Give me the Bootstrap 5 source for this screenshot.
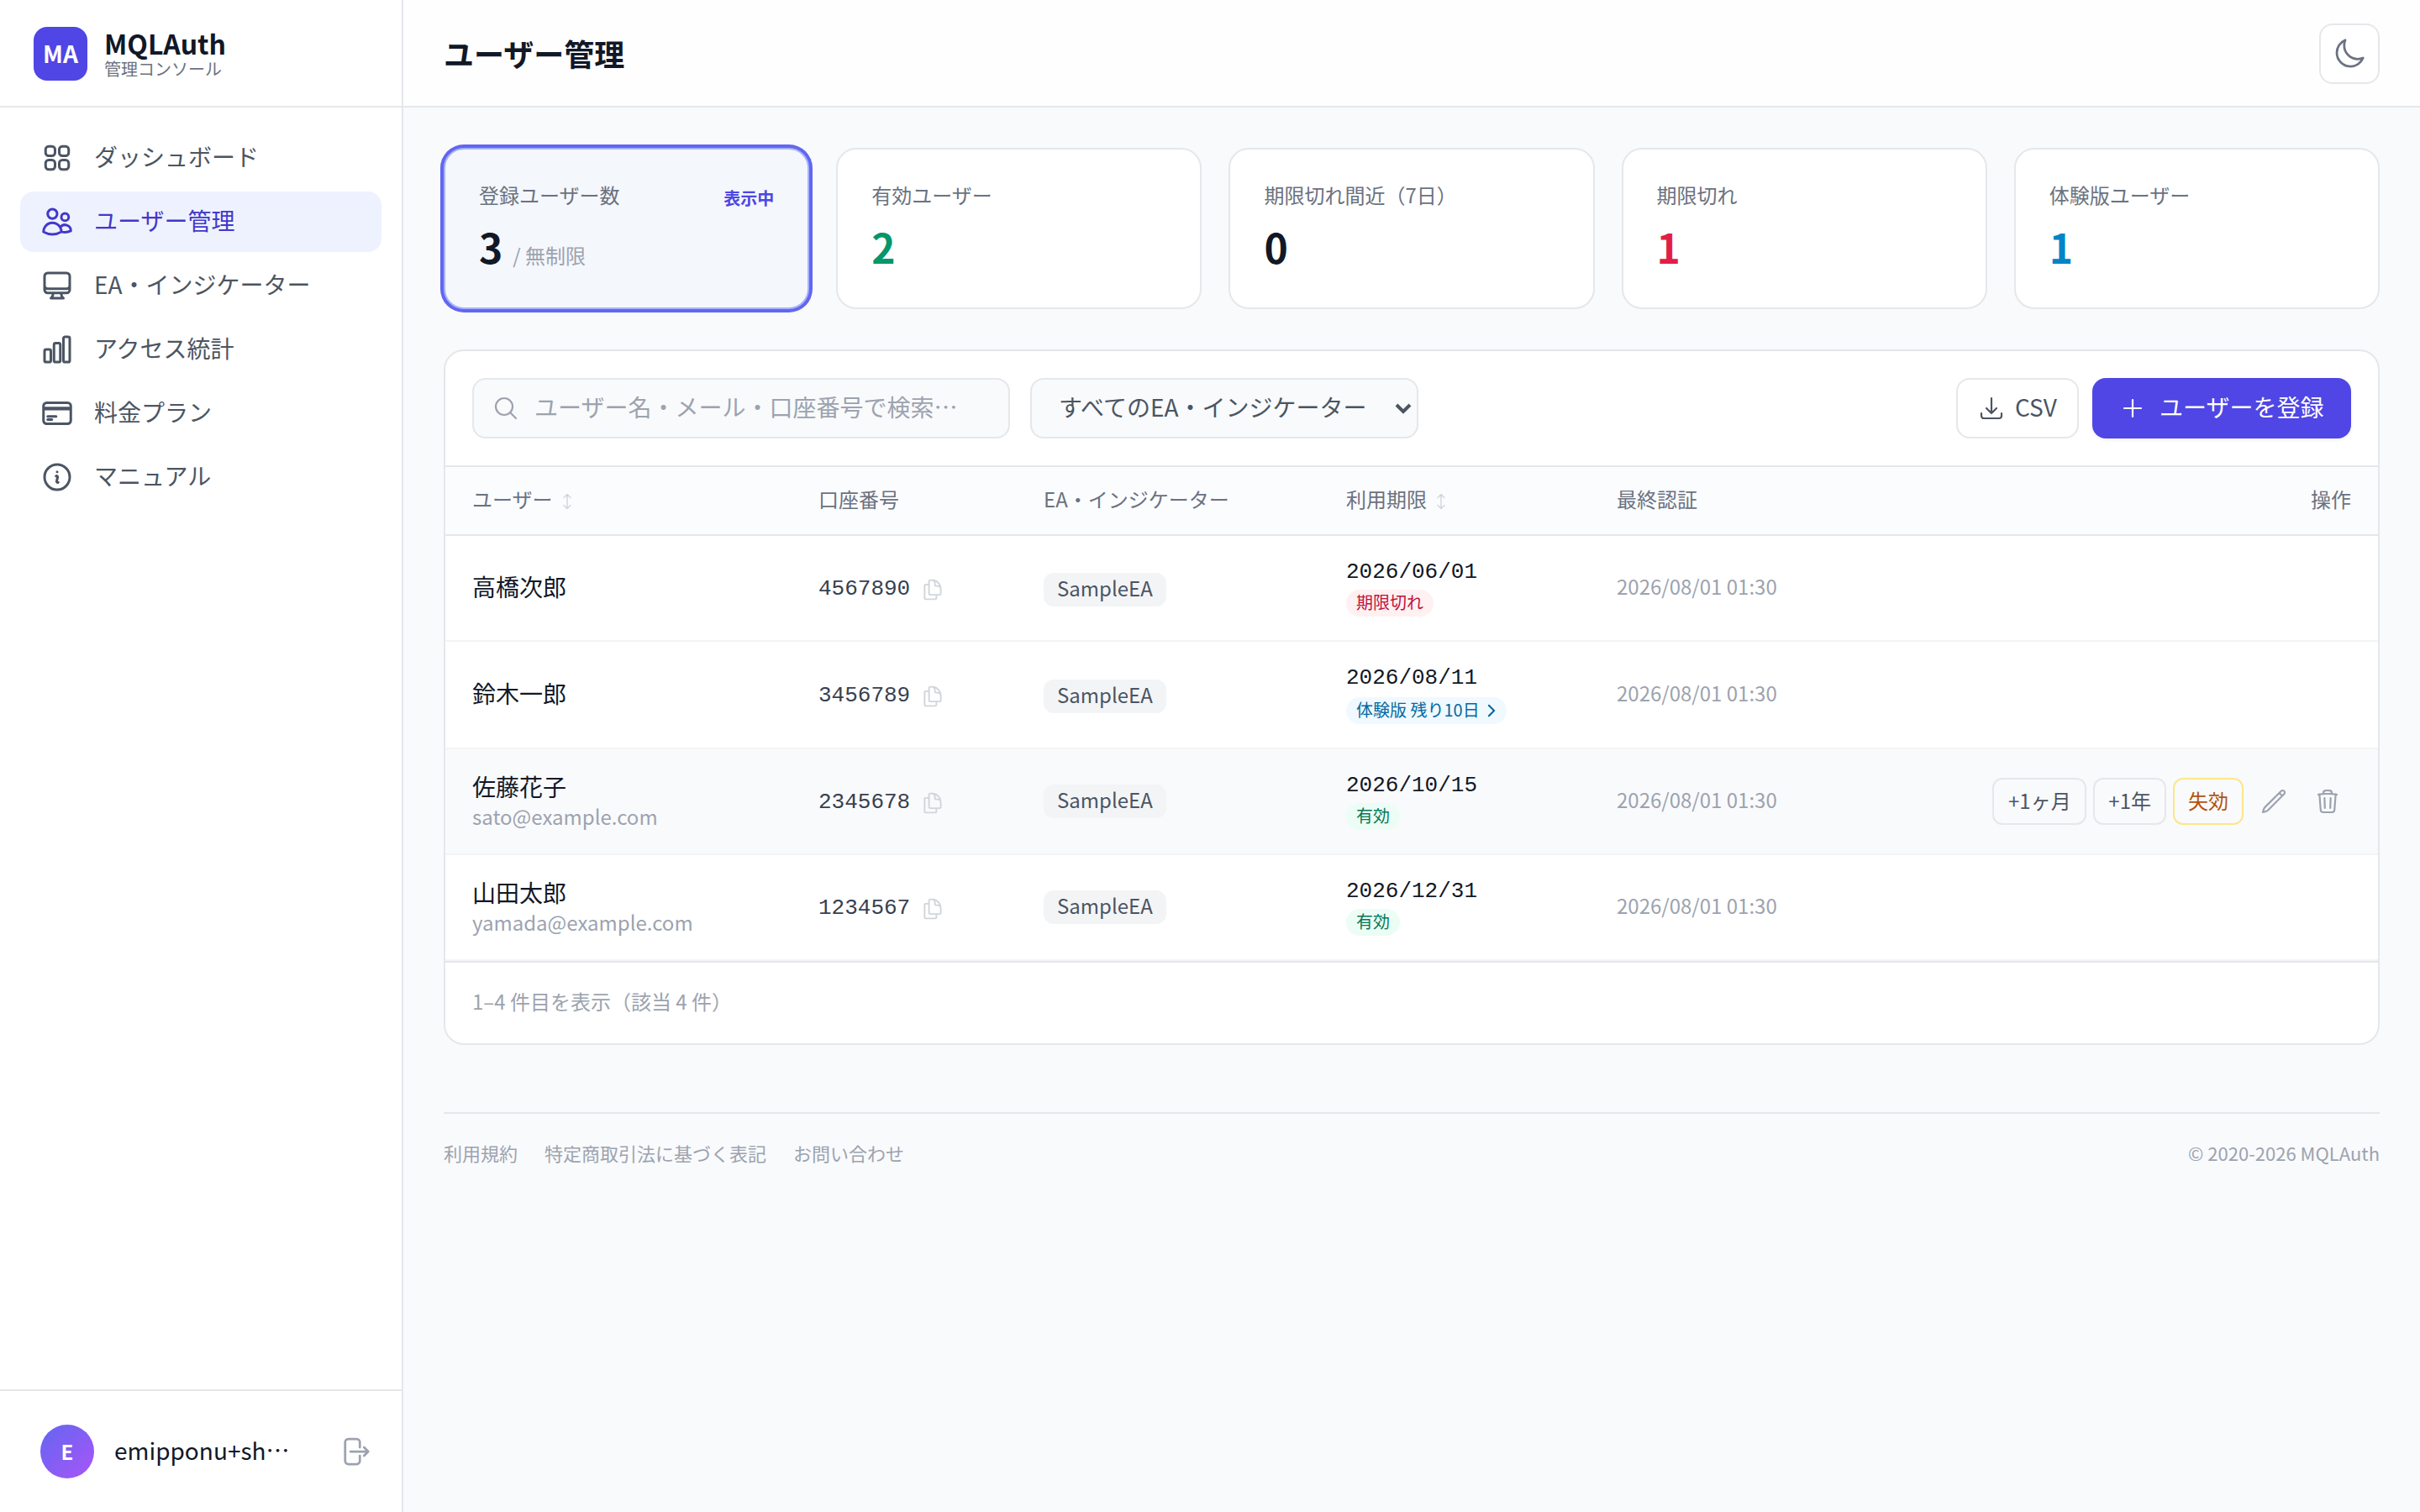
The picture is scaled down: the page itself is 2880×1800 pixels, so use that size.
<!DOCTYPE html>
<html lang="ja">
<head>
<meta charset="utf-8">
<meta name="viewport" content="width=device-width, initial-scale=1">
<title>ユーザー管理 | MQLAuth</title>
<link href="https://cdn.jsdelivr.net/npm/bootstrap@5.3.0/dist/css/bootstrap.min.css" rel="stylesheet">
<style>
  body { font-family: "Noto Sans CJK JP", sans-serif; font-size: 28px; line-height: 40px; color: #111827; background: #f9fafc; }
  a { text-decoration: none; color: inherit; }
  svg { fill: none; stroke: currentColor; stroke-width: 1.65; stroke-linecap: round; stroke-linejoin: round; flex: none; display: block; }
  .ico-lg { width: 40px; height: 40px; }
  .ico-md { width: 32px; height: 32px; }
  .ico-sm { width: 28px; height: 28px; }
  .txt { padding-bottom: 4px; }
  .app { height: 1800px; }

  .side { width: 480px; flex: none; border-right: 2px solid #e5e7eb; }
  .brand { height: 128px; padding: 2px 40px 0; gap: 20px; border-bottom: 2px solid #e5e7eb; }
  .logo { width: 64px; height: 64px; border-radius: 16px; background: #4f46e5; font-size: 28px; padding-bottom: 2px; }
  .brand-name { font-size: 32px; line-height: 36px; }
  .brand-sub { font-size: 20px; line-height: 26px; color: #6b7280; }
  .side .nav { padding: 24px; gap: 4px; }
  .side .nav-link { height: 72px; padding: 0 24px; gap: 24px; border-radius: 16px; color: #4b5563; }
  .side .nav-link.active { background: #eef2ff; color: #4338ca; }
  .side .nav-link svg { stroke-width: 1.8; }
  .account { height: 146px; padding: 0 36px 0 48px; border-top: 2px solid #e5e7eb; }
  .avatar { width: 64px; height: 64px; background: linear-gradient(135deg, #6366f1, #a855f7); font-size: 24px; }

  .topbar { height: 128px; padding: 2px 48px 0; background: #fefefe; border-bottom: 2px solid #e5e7eb; }
  .topbar h1 { font-size: 36px; line-height: 56px; padding-bottom: 2px; }
  .theme-btn { width: 72px; height: 72px; border: 2px solid #e5e7eb; border-radius: 16px; color: #6b7280; background: #fff; padding: 0; }

  .content { padding: 48px; }
  .stats { gap: 32px; margin-bottom: 48px; }
  .stat { flex: 1 1 0; height: 192px; border: 2px solid #e5e7eb; border-radius: 24px; padding: 38px 40px; background: #fff; position: relative; }
  .stat.on { border-color: #a5b4fc; background: #f4f7fc; box-shadow: 0 0 0 4px #6366f1; }
  .stat-label { font-size: 24px; line-height: 32px; color: #6b7280; }
  .stat-num { font-size: 48px; line-height: 64px; margin-top: 13px; font-weight: 700; }
  .stat-num span { font-size: 24px; font-weight: 400; color: #9ca3af; margin-left: 12px; }
  .stat-flag { position: absolute; right: 40px; top: 42px; font-size: 20px; line-height: 32px; font-weight: 700; color: #4f46e5; }
  .c-green { color: #059669; }
  .c-red { color: #e11d48; }
  .c-sky { color: #0284c7; }

  .panel { border: 2px solid #e5e7eb; border-radius: 24px; background: #fff; overflow: hidden; }
  .tools { padding: 32px; border-bottom: 2px solid #e5e7eb; }
  .field { height: 72px; border: 2px solid #e5e7eb; border-radius: 16px; background: #f9fafb; }
  .search { width: 640px; padding: 0 22px; gap: 18px; color: #9ca3af; margin-right: 24px; }
  .picker { width: 462px; padding: 0 6px 0 32px; color: #4b5563; }
  .caret { width: 20px; height: 14px; stroke-width: 4; stroke-linecap: butt; stroke-linejoin: miter; }
  .btn-tool { height: 72px; border-radius: 16px; font-size: 28px; line-height: 40px; display: inline-flex; align-items: center; white-space: nowrap; }
  .btn-csv { border: 2px solid #e5e7eb; color: #4b5563; padding: 0 22px 0 24px; gap: 12px; width: 146px; margin-right: 16px; }
  .btn-add { background: #4f46e5; color: #fff; border: 0; padding: 0 32px; gap: 16px; width: 308px; box-shadow: 0 2px 4px rgba(0,0,0,.05); }

  .users { table-layout: fixed; border-collapse: separate; border-spacing: 0; --bs-table-bg: transparent; color: #111827; }
  .users th, .users td { padding: 0 0 4px 32px; border: 0; vertical-align: middle; }
  .users thead tr { height: 82px; background: #fbfcfe; }
  .users th { font-size: 24px; line-height: 32px; font-weight: 400; color: #6b7280; border-bottom: 2px solid #e5e7eb; }
  .users tbody tr { height: 126px; }
  .users tbody tr.tall { height: 128px; }
  .users tbody tr.hov { background: #f9fafc; }
  .users td { border-bottom: 2px solid #f3f4f6; color: #111827; }
  .users .ends { text-align: right; padding-right: 32px; }
  .users td.ends { padding-bottom: 0; }
  .users td.flat { padding-bottom: 0; }
  .users td.until { vertical-align: top; padding-top: 23px; padding-bottom: 0; }
  .sort { display: inline-block; width: 10px; height: 20px; color: #d1d5db; margin-left: 12px; vertical-align: -3px; stroke-width: 1.4; }
  .mail { font-size: 24px; line-height: 32px; color: #9ca3af; }
  .num { font-family: "Liberation Mono", monospace; font-size: 26px; line-height: 40px; color: #374151; gap: 13px; padding-top: 1px; }
  .num svg { color: #d1d5db; margin-top: 3px; }
  .chip { display: block; width: max-content; height: 40px; font-size: 24px; line-height: 32px; padding: 2px 16px 6px; border-radius: 12px; background: #f3f4f6; color: #4b5563; }
  .users tbody tr:nth-child(-n+2) .chip { margin-top: 3px; }
  .date { font-family: "Liberation Mono", monospace; font-size: 26px; line-height: 40px; }
  .pill { display: flex; width: max-content; align-items: center; font-size: 20px; line-height: 28px; height: 32px; padding: 0 12px 2px; border-radius: 16px; margin-top: 1px; }
  .tall .pill { margin-top: 3px; }
  .pill svg { width: 16px; height: 20px; margin: 2px 0 0 4px; stroke-width: 2.5; }
  .pill-red { background: #fff1f2; color: #be123c; }
  .pill-sky { background: #f0f9ff; color: #0369a1; }
  .pill-green { background: #ecfdf5; color: #047857; }
  .users td.stamp { font-size: 24px; line-height: 32px; color: #9ca3af; }
  .btn-row { height: 56px; padding: 0 16px 3px; border: 2px solid #e5e7eb; border-radius: 12px; font-size: 24px; line-height: 32px; color: #4b5563; }
  .btn-row:first-child { min-width: 112px; }
  .btn-warn { border-color: #fde68a; color: #b45309; }
  .btn-ico { width: 56px; height: 56px; padding: 12px; border: 0; color: #9ca3af; }
  .count { height: 98px; padding: 0 32px 4px; font-size: 24px; line-height: 32px; color: #9ca3af; border-top: 2px solid #e5e7eb; }

  .foot { margin-top: 80px; border-top: 2px solid #e5e7eb; padding-top: 30px; gap: 32px; font-size: 22px; line-height: 32px; color: #9ca3af; }
</style>
<script src="https://cdn.jsdelivr.net/npm/bootstrap@5.3.0/dist/js/bootstrap.bundle.min.js"></script>
</head>
<body>
<svg width="0" height="0" class="position-absolute">
  <symbol id="i-copy" viewBox="0 0 24 24"><path d="M15.75 17.25v3.375c0 .621-.504 1.125-1.125 1.125h-9.75a1.125 1.125 0 0 1-1.125-1.125V7.875c0-.621.504-1.125 1.125-1.125H6.75a9.06 9.06 0 0 1 1.5.124m7.5 10.376h3.375c.621 0 1.125-.504 1.125-1.125V11.25c0-4.46-3.243-8.161-7.5-8.876a9.06 9.06 0 0 0-1.5-.124H9.375c-.621 0-1.125.504-1.125 1.125v3.5m7.5 10.375H9.375a1.125 1.125 0 0 1-1.125-1.125v-9.25m12 6.625v-1.875a3.375 3.375 0 0 0-3.375-3.375h-1.5a1.125 1.125 0 0 1-1.125-1.125v-1.5a3.375 3.375 0 0 0-3.375-3.375H9.75"/></symbol>
  <symbol id="i-sort" viewBox="0 0 10 20"><path d="M5 1.500v17M1 5.500 5 1.500l4 4M1 14.500l4 4 4-4"/></symbol>
</svg>
<div class="app d-flex">
  <aside class="side bg-white d-flex flex-column">
    <div class="brand d-flex align-items-center">
      <div class="logo d-flex align-items-center justify-content-center text-white fw-bold">MA</div>
      <div>
        <div class="brand-name fw-bold">MQLAuth</div>
        <div class="brand-sub">管理コンソール</div>
      </div>
    </div>
    <nav class="nav flex-column flex-nowrap flex-grow-1">
      <a class="nav-link d-flex align-items-center" href="#"><svg class="ico-lg" viewBox="0 0 24 24"><path d="M3.750 6A2.250 2.250 0 0 1 6 3.750h2.250A2.250 2.250 0 0 1 10.500 6v2.250a2.250 2.250 0 0 1-2.250 2.250H6a2.250 2.250 0 0 1-2.250-2.250V6ZM3.750 15.750A2.250 2.250 0 0 1 6 13.500h2.250a2.250 2.250 0 0 1 2.250 2.250V18a2.250 2.250 0 0 1-2.250 2.250H6A2.250 2.250 0 0 1 3.750 18v-2.250ZM13.500 6a2.250 2.250 0 0 1 2.250-2.250H18A2.250 2.250 0 0 1 20.250 6v2.250A2.250 2.250 0 0 1 18 10.500h-2.250a2.250 2.250 0 0 1-2.250-2.250V6ZM13.500 15.750a2.250 2.250 0 0 1 2.250-2.250H18a2.250 2.250 0 0 1 2.250 2.250V18A2.250 2.250 0 0 1 18 20.250h-2.250A2.250 2.250 0 0 1 13.500 18v-2.250Z"/></svg><span class="txt">ダッシュボード</span></a>
      <a class="nav-link active d-flex align-items-center" href="#"><svg class="ico-lg" viewBox="0 0 24 24"><path d="M15 19.128a9.38 9.38 0 0 0 2.625.372 9.337 9.337 0 0 0 4.121-.952 4.125 4.125 0 0 0-7.533-2.493M15 19.128v-.003c0-1.113-.285-2.160-.786-3.070M15 19.128v.106A12.318 12.318 0 0 1 8.624 21c-2.331 0-4.512-.645-6.374-1.766l-.001-.109a6.375 6.375 0 0 1 11.964-3.070M12 6.375a3.375 3.375 0 1 1-6.750 0 3.375 3.375 0 0 1 6.750 0Zm8.250 2.250a2.625 2.625 0 1 1-5.250 0 2.625 2.625 0 0 1 5.250 0Z"/></svg><span class="txt">ユーザー管理</span></a>
      <a class="nav-link d-flex align-items-center" href="#"><svg class="ico-lg" viewBox="0 0 24 24"><path d="M9 17.250v1.007a3 3 0 0 1-.879 2.122L7.500 21h9l-.621-.621A3 3 0 0 1 15 18.257V17.250m6-12V15a2.250 2.250 0 0 1-2.250 2.250H5.250A2.250 2.250 0 0 1 3 15V5.250m18 0A2.250 2.250 0 0 0 18.750 3H5.250A2.250 2.250 0 0 0 3 5.250m18 0V12a2.250 2.250 0 0 1-2.250 2.250H5.250A2.250 2.250 0 0 1 3 12V5.250"/></svg><span class="txt">EA・インジケーター</span></a>
      <a class="nav-link d-flex align-items-center" href="#"><svg class="ico-lg" viewBox="0 0 24 24"><path d="M3 13.125C3 12.504 3.504 12 4.125 12h2.250c.621 0 1.125.504 1.125 1.125v6.750C7.500 20.496 6.996 21 6.375 21h-2.250A1.125 1.125 0 0 1 3 19.875v-6.750ZM9.750 8.625c0-.621.504-1.125 1.125-1.125h2.250c.621 0 1.125.504 1.125 1.125v11.250c0 .621-.504 1.125-1.125 1.125h-2.250a1.125 1.125 0 0 1-1.125-1.125V8.625ZM16.500 4.125c0-.621.504-1.125 1.125-1.125h2.250C20.496 3 21 3.504 21 4.125v15.750c0 .621-.504 1.125-1.125 1.125h-2.250a1.125 1.125 0 0 1-1.125-1.125V4.125Z"/></svg><span class="txt">アクセス統計</span></a>
      <a class="nav-link d-flex align-items-center" href="#"><svg class="ico-lg" viewBox="0 0 24 24"><path d="M2.250 8.250h19.500M2.250 9h19.500m-16.500 5.250h6m-6 2.250h3m-3.750 3h15a2.250 2.250 0 0 0 2.250-2.250V6.750A2.250 2.250 0 0 0 19.500 4.500h-15a2.250 2.250 0 0 0-2.250 2.250v10.500A2.250 2.250 0 0 0 4.500 19.500Z"/></svg><span class="txt">料金プラン</span></a>
      <a class="nav-link d-flex align-items-center" href="#"><svg class="ico-lg" viewBox="0 0 24 24"><path d="m11.250 11.250.041-.020a.75.75 0 0 1 1.063.852l-.708 2.836a.75.75 0 0 0 1.063.853l.041-.021M21 12a9 9 0 1 1-18 0 9 9 0 0 1 18 0Zm-9-3.750h.008v.008H12V8.250Z"/></svg><span class="txt">マニュアル</span></a>
    </nav>
    <div class="account d-flex align-items-center">
      <div class="avatar rounded-circle d-flex align-items-center justify-content-center text-white fw-bold me-4">E</div>
      <div class="txt flex-grow-1">emipponu+sh…</div>
      <svg class="ico-lg" viewBox="0 0 24 24" color="#9ca3af"><path d="M15.750 9V5.250A2.250 2.250 0 0 0 13.500 3h-6a2.250 2.250 0 0 0-2.250 2.250v13.500A2.250 2.250 0 0 0 7.500 21h6a2.250 2.250 0 0 0 2.250-2.250V15m3 0 3-3m0 0-3-3m3 3H9"/></svg>
    </div>
  </aside>

  <div class="flex-grow-1 d-flex flex-column">
    <header class="topbar d-flex align-items-center justify-content-between">
      <h1 class="fw-bold m-0">ユーザー管理</h1>
      <button class="theme-btn d-flex align-items-center justify-content-center"><svg class="ico-lg" viewBox="0 0 24 24"><path d="M21.752 15.002A9.720 9.720 0 0 1 18 15.750c-5.385 0-9.750-4.365-9.750-9.750 0-1.330.266-2.597.748-3.752A9.753 9.753 0 0 0 3 11.250C3 16.635 7.365 21 12.750 21a9.753 9.753 0 0 0 9.002-5.998Z"/></svg></button>
    </header>

    <main class="content">
      <div class="stats d-flex">
        <div class="stat on"><div class="stat-label">登録ユーザー数</div><div class="stat-num">3<span>/ 無制限</span></div><div class="stat-flag">表示中</div></div>
        <div class="stat"><div class="stat-label">有効ユーザー</div><div class="stat-num c-green">2</div></div>
        <div class="stat"><div class="stat-label">期限切れ間近（7日）</div><div class="stat-num">0</div></div>
        <div class="stat"><div class="stat-label">期限切れ</div><div class="stat-num c-red">1</div></div>
        <div class="stat"><div class="stat-label">体験版ユーザー</div><div class="stat-num c-sky">1</div></div>
      </div>

      <section class="panel">
        <div class="tools d-flex align-items-center">
          <div class="field search d-flex align-items-center"><svg class="ico-md" viewBox="0 0 24 24"><path d="m21 21-5.197-5.197m0 0A7.500 7.500 0 1 0 5.196 5.196a7.500 7.500 0 0 0 10.607 10.607Z"/></svg><span class="txt">ユーザー名・メール・口座番号で検索…</span></div>
          <div class="field picker d-flex align-items-center justify-content-between"><span class="txt">すべてのEA・インジケーター</span><svg class="caret" viewBox="0 0 20 14"><path d="M2 3l8 8 8-8"/></svg></div>
          <button class="btn btn-tool btn-csv ms-auto"><svg class="ico-md" viewBox="0 0 24 24"><path d="M3 16.500v2.250A2.250 2.250 0 0 0 5.250 21h13.500A2.250 2.250 0 0 0 21 18.750V16.500M16.500 12 12 16.500m0 0L7.500 12m4.500 4.500V3"/></svg><span class="txt">CSV</span></button>
          <button class="btn btn-tool btn-add"><svg class="ico-md" viewBox="0 0 24 24"><path d="M12 4.500v15m7.500-7.500h-15"/></svg><span class="txt">ユーザーを登録</span></button>
        </div>

        <table class="table users mb-0">
          <colgroup><col style="width:412px"><col style="width:268px"><col style="width:360px"><col style="width:322px"><col style="width:300px"><col></colgroup>
          <thead><tr>
            <th>ユーザー<svg class="sort"><use href="#i-sort"/></svg></th><th>口座番号</th><th>EA・インジケーター</th><th>利用期限<svg class="sort"><use href="#i-sort"/></svg></th><th>最終認証</th><th class="ends">操作</th>
          </tr></thead>
          <tbody>
            <tr>
              <td>高橋次郎</td>
              <td class="flat"><div class="num d-flex align-items-center">4567890<svg class="ico-sm"><use href="#i-copy"/></svg></div></td>
              <td class="flat"><span class="chip">SampleEA</span></td>
              <td class="until"><div class="date">2026/06/01</div><span class="pill pill-red">期限切れ</span></td>
              <td class="stamp">2026/08/01 01:30</td><td></td>
            </tr>
            <tr class="tall">
              <td>鈴木一郎</td>
              <td class="flat"><div class="num d-flex align-items-center">3456789<svg class="ico-sm"><use href="#i-copy"/></svg></div></td>
              <td class="flat"><span class="chip">SampleEA</span></td>
              <td class="until"><div class="date">2026/08/11</div><span class="pill pill-sky">体験版 残り10日<svg viewBox="0 0 19.200 24"><path d="m8.250 4.500 7.500 7.500-7.500 7.500"/></svg></span></td>
              <td class="stamp">2026/08/01 01:30</td><td></td>
            </tr>
            <tr class="hov">
              <td><div>佐藤花子</div><div class="mail">sato@example.com</div></td>
              <td class="flat"><div class="num d-flex align-items-center">2345678<svg class="ico-sm"><use href="#i-copy"/></svg></div></td>
              <td class="flat"><span class="chip">SampleEA</span></td>
              <td class="until"><div class="date">2026/10/15</div><span class="pill pill-green">有効</span></td>
              <td class="stamp">2026/08/01 01:30</td>
              <td class="ends"><div class="d-flex justify-content-end gap-2">
                <button class="btn btn-row">+1ヶ月</button><button class="btn btn-row">+1年</button><button class="btn btn-row btn-warn">失効</button>
                <button class="btn btn-ico"><svg class="ico-md" viewBox="0 0 24 24"><path d="m16.862 4.487 1.687-1.688a1.875 1.875 0 1 1 2.652 2.652L6.832 19.820a4.500 4.500 0 0 1-1.897 1.130l-2.685.8.8-2.685a4.500 4.500 0 0 1 1.130-1.897L16.863 4.487Zm0 0L19.500 7.125"/></svg></button>
                <button class="btn btn-ico"><svg class="ico-md" viewBox="0 0 24 24"><path d="m14.740 9-.346 9m-4.788 0L9.260 9m9.968-3.210c.342.052.682.107 1.022.166m-1.022-.165L18.160 19.673a2.250 2.250 0 0 1-2.244 2.077H8.084a2.250 2.250 0 0 1-2.244-2.077L4.772 5.790m14.456 0a48.108 48.108 0 0 0-3.478-.397m-12 .562c.340-.059.680-.114 1.022-.165m0 0a48.110 48.110 0 0 1 3.478-.397m7.500 0v-.916c0-1.180-.910-2.164-2.090-2.201a51.964 51.964 0 0 0-3.320 0c-1.180.037-2.090 1.022-2.090 2.201v.916m7.500 0a48.667 48.667 0 0 0-7.500 0"/></svg></button>
              </div></td>
            </tr>
            <tr>
              <td><div>山田太郎</div><div class="mail">yamada@example.com</div></td>
              <td class="flat"><div class="num d-flex align-items-center">1234567<svg class="ico-sm"><use href="#i-copy"/></svg></div></td>
              <td class="flat"><span class="chip">SampleEA</span></td>
              <td class="until"><div class="date">2026/12/31</div><span class="pill pill-green">有効</span></td>
              <td class="stamp">2026/08/01 01:30</td><td></td>
            </tr>
          </tbody>
        </table>
        <div class="count d-flex align-items-center">1–4 件目を表示（該当 4 件）</div>
      </section>

      <footer class="foot d-flex">
        <a href="#">利用規約</a><a href="#">特定商取引法に基づく表記</a><a href="#">お問い合わせ</a>
        <span class="ms-auto">© 2020-2026 MQLAuth</span>
      </footer>
    </main>
  </div>
</div>
</body>
</html>
